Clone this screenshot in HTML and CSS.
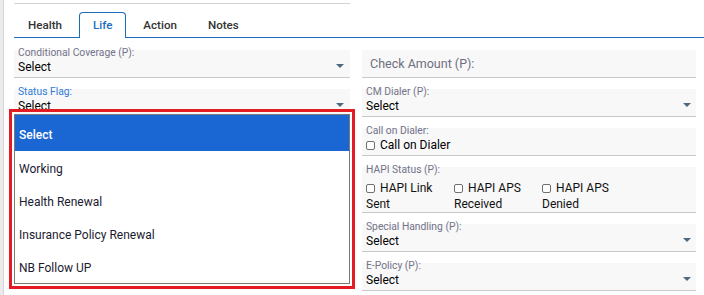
FILE: index.html
```html
<!DOCTYPE html>
<html lang="en">

<head>
  <meta charset="UTF-8" />
  <meta name="viewport" content="width=device-width, initial-scale=1.0" />
  <title>Life</title>
  <link rel="stylesheet" href="styles.css">
</head>

<body>
  <div class="page">
    <div class="rail"></div>

    <main class="panel">
      <div class="top-rule"></div>

      <nav class="tabs">
        <span class="tab">Health</span>
        <span class="tab active">Life</span>
        <span class="tab">Action</span>
        <span class="tab">Notes</span>
      </nav>

      <div class="columns">
        <!-- Left column -->
        <div class="col left">
          <div class="field">
            <div class="label">Conditional Coverage (P):</div>
            <div class="value">Select <span class="caret"></span></div>
          </div>

          <div class="field open">
            <div class="label focus">Status Flag:</div>
            <div class="value">Select <span class="caret"></span></div>

            <ul class="dropdown">
              <li class="selected">Select</li>
              <li>Working</li>
              <li>Health Renewal</li>
              <li>Insurance Policy Renewal</li>
              <li>NB Follow UP</li>
            </ul>
          </div>
        </div>

        <!-- Right column -->
        <div class="col right">
          <div class="input-box">Check Amount (P):</div>

          <div class="field">
            <div class="label">CM Dialer (P):</div>
            <div class="value">Select <span class="caret"></span></div>
          </div>

          <div class="field">
            <div class="label">Call on Dialer:</div>
            <div class="value check-row">
              <label><span class="box"></span>Call on Dialer</label>
            </div>
          </div>

          <div class="field hapi">
            <div class="label">HAPI Status (P):</div>
            <div class="options">
              <label><span class="box"></span>HAPI Link Sent</label>
              <label><span class="box"></span>HAPI APS Received</label>
              <label><span class="box"></span>HAPI APS Denied</label>
            </div>
          </div>

          <div class="field">
            <div class="label">Special Handling (P):</div>
            <div class="value">Select <span class="caret"></span></div>
          </div>

          <div class="field">
            <div class="label">E-Policy (P):</div>
            <div class="value">Select <span class="caret"></span></div>
          </div>
        </div>
      </div>
    </main>
  </div>
</body>

</html>
```

FILE: styles.css
```css
* {
  box-sizing: border-box;
}

body {
  font-family: 'Roboto', 'Liberation Sans', sans-serif;
  margin: 0;
  padding: 0;
  background: #fff;
  color: #111;
  width: 704px;
  height: 295px;
  overflow: hidden;
}

.page {
  display: flex;
  height: 295px;
}

.rail {
  width: 4px;
  flex: none;
  background: #ebebeb;
  border-right: 1px solid #d6d6d6;
}

.panel {
  flex: 1;
  padding: 0 8px 0 10px;
}

.top-rule {
  width: 336px;
  height: 1px;
  margin-top: 3px;
  background: #d3d3d3;
}

.tabs {
  display: flex;
  margin-top: 8px;
  margin-right: -8px;
  border-bottom: 1px solid #1c6cbd;
}

.tab {
  height: 26px;
  line-height: 25px;
  padding: 0 13px;
  margin-right: 3px;
  margin-bottom: -1px;
  border: 1px solid transparent;
  border-bottom: none;
  border-radius: 4px 4px 0 0;
  font-size: 11.6px;
  font-weight: 500;
  color: #333;
}

.tab.active {
  border-color: #1c6cbd;
  background: #fff;
  color: #1c6cbd;
}

.columns {
  display: grid;
  grid-template-columns: 336px 334px;
  column-gap: 12px;
}

.field {
  position: relative;
  margin-top: 8px;
  padding: 0 4px 1px;
  border-bottom: 1px solid #c9c9c9;
  background: linear-gradient(#fff 0 3px, #f8f8f8 3px);
}

.left .field:first-child {
  margin-top: 9px;
}

.label {
  font-size: 10.3px;
  line-height: 12px;
  color: #73738a;
}

.label.focus {
  color: #2f7bd8;
}

.value {
  display: flex;
  align-items: center;
  justify-content: space-between;
  font-size: 12px;
  line-height: 17px;
  color: #000;
}

.caret {
  width: 0;
  height: 0;
  margin: 0 2px 4px 0;
  border-left: 4px solid transparent;
  border-right: 4px solid transparent;
  border-top: 4px solid #4f6880;
}

.right .caret {
  margin-right: 1px;
}

.input-box {
  margin-top: 12px;
  height: 28px;
  line-height: 27px;
  padding-left: 8px;
  background: #f8f8f8;
  border-bottom: 1px solid #c9c9c9;
  font-size: 12.5px;
  color: #6f6f80;
}

label {
  display: inline-block;
}

.box {
  display: inline-block;
  width: 9px;
  height: 9px;
  margin-right: 5px;
  border: 1px solid #707070;
  border-radius: 2px;
  background: #fff;
  vertical-align: -0.5px;
}

.check-row {
  justify-content: flex-start;
}

.hapi {
  padding-bottom: 0;
}

.options {
  display: grid;
  grid-template-columns: repeat(3, 84px);
  column-gap: 4px;
  margin-top: 4px;
  font-size: 12px;
  line-height: 16px;
}

.dropdown {
  position: absolute;
  top: 28px;
  left: 0;
  right: 0;
  margin: 0;
  padding: 0;
  list-style: none;
  background: #fff;
  border: 1px solid #7a7a7a;
  outline: 3px solid #e31b23;
  outline-offset: 2px;
  z-index: 5;
}

.dropdown li {
  height: 33px;
  padding: 3px 4px 0;
  line-height: 30px;
  font-size: 12px;
  color: #1b1b2f;
}

.dropdown li.selected {
  height: 36px;
  padding-top: 5px;
  line-height: 31px;
  background: #1a66d2;
  color: #fff;
  font-weight: 500;
}
```
